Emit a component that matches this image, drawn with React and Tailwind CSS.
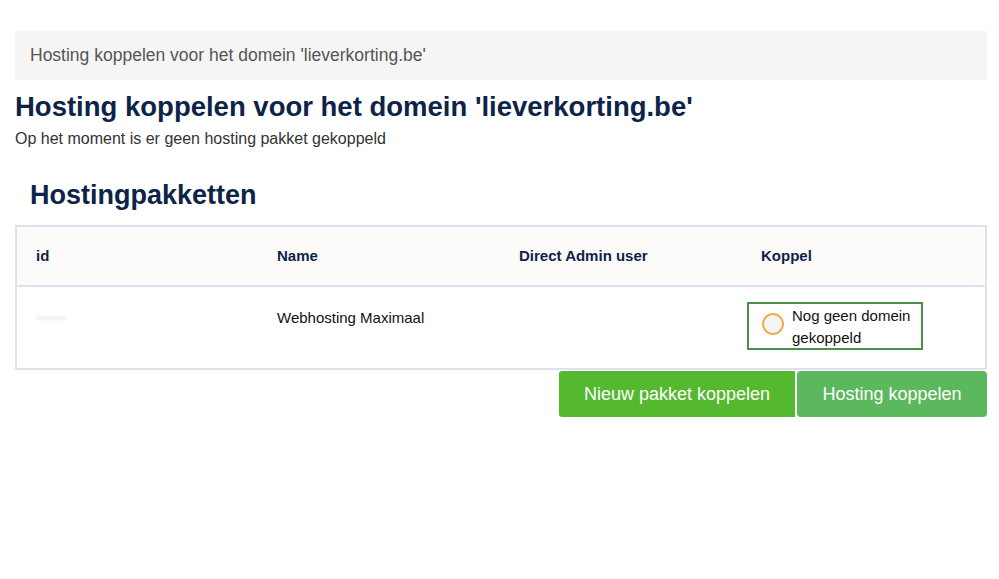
export default function App() {
  const navy = 'text-[#0d2447]'

  return (
    <div className="min-h-[579px] bg-white pt-[31px] px-[15px] pr-[12px] font-['Liberation_Sans',Arial,sans-serif]">
      <div className="h-[49px] flex items-center bg-[#f5f5f5] px-[15px] text-[17.5px] text-[#555]">
        Hosting koppelen voor het domein 'lieverkorting.be'
      </div>

      <h1 className={`mt-[11px] text-[27.5px] leading-[32px] font-bold ${navy}`}>
        Hosting koppelen voor het domein 'lieverkorting.be'
      </h1>
      <p className="mt-[6px] text-[16px] leading-[20px] text-[#333]">
        Op het moment is er geen hosting pakket gekoppeld
      </p>

      <h2 className={`mt-[30px] ml-[15px] text-[27px] leading-[32px] font-bold ${navy}`}>Hostingpakketten</h2>

      <div className="mt-[14px] border-2 border-[#dfe1ef]">
        <div className={`grid grid-cols-4 h-[60px] items-center bg-[#fcfbfa] border-b-2 border-[#dfe1ef] text-[15px] font-bold ${navy}`}>
          <div className="pl-[19px]">id</div>
          <div className="pl-[18px]">Name</div>
          <div className="pl-[18px]">Direct Admin user</div>
          <div className="pl-[18px]">Koppel</div>
        </div>
        <div className="grid grid-cols-4 h-[81px] text-[15px] text-[#111]">
          <div className="pl-[19px] pt-[29px]">
            <div className="h-[4px] w-[30px] rounded-full bg-[#f3f3f3] blur-[1px]"></div>
          </div>
          <div className="pl-[18px] pt-[20px]">Webhosting Maximaal</div>
          <div></div>
          <div className="pl-[4px] pt-[15px]">
            <label className="flex w-[176px] h-[48px] items-start gap-[8px] border-2 border-[#4b8f4b] pl-[13px] pr-[4px] pt-[1px] leading-[22px]">
              <span className="mt-[8px] shrink-0 w-[22px] h-[22px] rounded-full border-2 border-[#f0ad4e] bg-[#f5f5f5]"></span>
              <span>Nog geen domein gekoppeld</span>
            </label>
          </div>
        </div>
      </div>

      <div className="flex justify-end gap-[2px] mt-[1px]">
        <button className="w-[236px] h-[46px] bg-[#54b92f] text-white text-[18px] rounded-l-[3px]">
          Nieuw pakket koppelen
        </button>
        <button className="w-[190px] h-[46px] bg-[#5cb85c] text-white text-[18px] rounded-[4px]">
          Hosting koppelen
        </button>
      </div>
    </div>
  )
}
